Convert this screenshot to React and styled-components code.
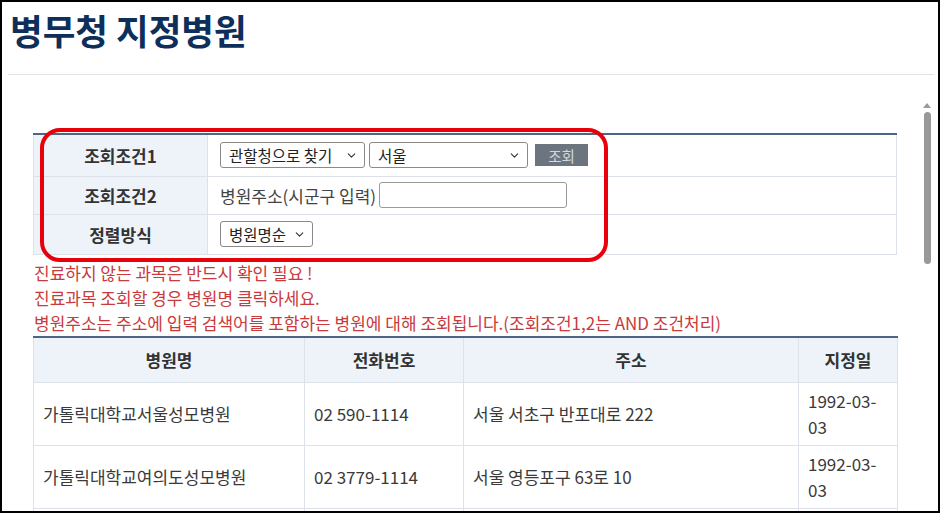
import styled, { createGlobalStyle } from "styled-components";
import { ChevronDown } from "lucide-react";

const hospitals = [
  {
    name: "가톨릭대학교서울성모병원",
    tel: "02 590-1114",
    addr: "서울 서초구 반포대로 222",
    date: "1992-03-03",
  },
  {
    name: "가톨릭대학교여의도성모병원",
    tel: "02 3779-1114",
    addr: "서울 영등포구 63로 10",
    date: "1992-03-03",
  },
  {
    name: "강남세브란스병원",
    tel: "02 2019-3114",
    addr: "서울 강남구 언주로 211",
    date: "1992-03-03",
  },
];

function App() {
  return (
    <>
      <GlobalStyle />
      <Frame>
        <Header>
          <Title>병무청 지정병원</Title>
        </Header>
        <Body>
          <Main>
            <SearchArea>
              <SearchTable>
                <tbody>
                  <tr>
                    <LabelCell $h={42}>조회조건1</LabelCell>
                    <FieldCell>
                      <Controls>
                        <FakeSelect $w={145}>
                          관할청으로 찾기
                          <ChevronDown size={13} strokeWidth={2} />
                        </FakeSelect>
                        <FakeSelect $w={159}>
                          서울
                          <ChevronDown size={13} strokeWidth={2} />
                        </FakeSelect>
                        <SearchButton type="button">조회</SearchButton>
                      </Controls>
                    </FieldCell>
                  </tr>
                  <tr>
                    <LabelCell $h={38}>조회조건2</LabelCell>
                    <FieldCell>
                      <Controls $gap={3}>
                        <span>병원주소(시군구 입력)</span>
                        <TextInput type="text" />
                      </Controls>
                    </FieldCell>
                  </tr>
                  <tr>
                    <LabelCell $h={40}>정렬방식</LabelCell>
                    <FieldCell>
                      <FakeSelect $w={93}>
                        병원명순
                        <ChevronDown size={13} strokeWidth={2} />
                      </FakeSelect>
                    </FieldCell>
                  </tr>
                </tbody>
              </SearchTable>
              <Highlight />
            </SearchArea>

            <Notes>
              <p>진료하지 않는 과목은 반드시 확인 필요 !</p>
              <p>진료과목 조회할 경우 병원명 클릭하세요.</p>
              <p>
                병원주소는 주소에 입력 검색어를 포함하는 병원에 대해
                조회됩니다.(조회조건1,2는 AND 조건처리)
              </p>
            </Notes>

            <ResultTable>
              <colgroup>
                <col style={{ width: 271 }} />
                <col style={{ width: 159 }} />
                <col style={{ width: 335 }} />
                <col style={{ width: 99 }} />
              </colgroup>
              <thead>
                <tr>
                  <HeadCell>병원명</HeadCell>
                  <HeadCell>전화번호</HeadCell>
                  <HeadCell>주소</HeadCell>
                  <HeadCell>지정일</HeadCell>
                </tr>
              </thead>
              <tbody>
                {hospitals.map((h) => (
                  <tr key={h.name}>
                    <DataCell>{h.name}</DataCell>
                    <DataCell>{h.tel}</DataCell>
                    <DataCell>{h.addr}</DataCell>
                    <DataCell>{h.date}</DataCell>
                  </tr>
                ))}
              </tbody>
            </ResultTable>
          </Main>
          <ScrollRail>
            <ScrollArrow />
            <ScrollThumb />
          </ScrollRail>
        </Body>
      </Frame>
    </>
  );
}

export default App;

const GlobalStyle = createGlobalStyle`
  * {
    box-sizing: border-box;
  }
  body {
    margin: 0;
    background: #ffffff;
    font-family: "Noto Sans CJK KR", "Noto Sans", sans-serif;
    color: #333333;
  }
  p {
    margin: 0;
  }
`;

const Frame = styled.div`
  width: 940px;
  height: 513px;
  border: 2px solid #000000;
  display: flex;
  flex-direction: column;
  overflow: hidden;
  background: #ffffff;
`;

const Header = styled.header`
  height: 73px;
  flex-shrink: 0;
  margin: 0 4px 0 6px;
  padding: 7px 0 0 2px;
  border-bottom: 1px solid #e4e4e4;
`;

const Title = styled.h1`
  margin: 0;
  font-size: 35.5px;
  line-height: 42px;
  font-weight: 700;
  color: #0e2f5a;
`;

const Body = styled.div`
  flex: 1;
  display: flex;
  min-height: 0;
`;

const Main = styled.main`
  width: 895px;
  padding: 58px 0 0 31px;
`;

const SearchArea = styled.div`
  position: relative;
  width: 864px;
`;

const SearchTable = styled.table`
  width: 100%;
  border-collapse: collapse;
  border-top: 2px solid #4f6585;
  font-size: 17px;
  & tr {
    border-bottom: 1px solid #dde2ea;
  }
`;

const LabelCell = styled.th`
  width: 174px;
  height: ${(p) => p.$h}px;
  padding: 0;
  background: #eef3fa;
  border-right: 1px solid #dde2ea;
  border-left: 1px solid #dde2ea;
  font-weight: 700;
  color: #333333;
  text-align: center;
  vertical-align: middle;
`;

const FieldCell = styled.td`
  padding: 0 0 0 12px;
  vertical-align: middle;
  border-right: 1px solid #dde2ea;
  color: #444444;
`;

const Controls = styled.div`
  display: flex;
  align-items: center;
  gap: ${(p) => p.$gap ?? 4}px;
`;

const FakeSelect = styled.div`
  width: ${(p) => p.$w}px;
  height: 26px;
  padding: 0 6px 0 8px;
  display: inline-flex;
  align-items: center;
  justify-content: space-between;
  border: 1px solid #8a8a8a;
  border-radius: 3px;
  background: #ffffff;
  color: #222222;
  font-size: 15.5px;
  white-space: nowrap;
  & svg {
    color: #333333;
    flex-shrink: 0;
  }
`;

const SearchButton = styled.button`
  margin-left: 3px;
  width: 53px;
  height: 22px;
  border: none;
  border-radius: 0;
  background: #6c757f;
  color: #d4d8dc;
  font-family: inherit;
  font-size: 14.5px;
  padding: 0;
`;

const TextInput = styled.input`
  width: 188px;
  height: 26px;
  border: 1px solid #9a9a9a;
  border-radius: 3px;
  padding: 0 6px;
  font-family: inherit;
`;

const Highlight = styled.div`
  position: absolute;
  left: 7px;
  top: -5px;
  width: 568px;
  height: 134px;
  border: 4px solid #e8000b;
  border-radius: 20px;
  pointer-events: none;
`;

const Notes = styled.div`
  margin-top: 5px;
  padding-left: 1px;
  font-size: 17px;
  line-height: 25.4px;
  color: #c93a3c;
  white-space: nowrap;
`;

const ResultTable = styled.table`
  width: 864px;
  table-layout: fixed;
  border-collapse: collapse;
  border-top: 2px solid #4f6585;
  font-size: 17px;
`;

const HeadCell = styled.th`
  height: 46px;
  padding: 0;
  background: #eef3fa;
  border: 1px solid #dde2ea;
  border-top: none;
  font-weight: 700;
  color: #333333;
  text-align: center;
`;

const DataCell = styled.td`
  height: 62px;
  padding: 5px 9px;
  border: 1px solid #dde2ea;
  line-height: 26px;
  color: #3a3a3a;
  vertical-align: middle;
`;

const ScrollRail = styled.div`
  margin-left: auto;
  margin-right: 4px;
  width: 14px;
  padding-top: 28px;
  display: flex;
  flex-direction: column;
  align-items: center;
  gap: 4px;
`;

const ScrollArrow = styled.div`
  width: 0;
  height: 0;
  border-left: 4px solid transparent;
  border-right: 4px solid transparent;
  border-bottom: 5px solid #9a9a9a;
`;

const ScrollThumb = styled.div`
  width: 7px;
  height: 152px;
  border-radius: 4px;
  background: #999999;
`;
